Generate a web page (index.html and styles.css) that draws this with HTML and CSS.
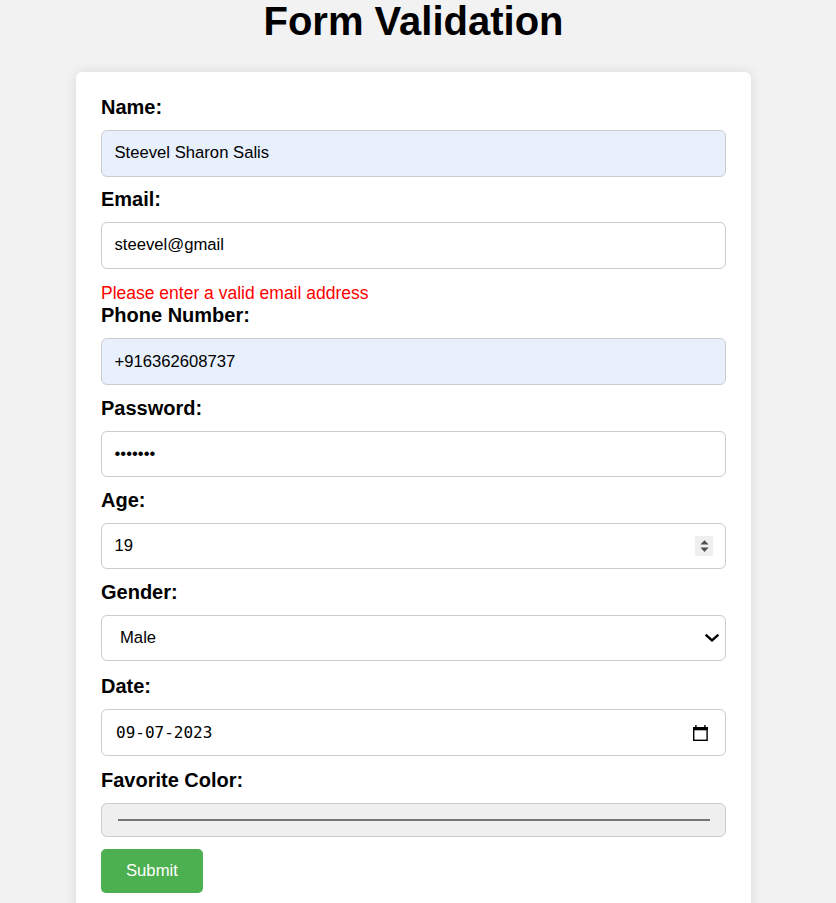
FILE: index.html
```html
<!DOCTYPE html>
<html lang="en">
<head>
<meta charset="utf-8">
<title>Form Validation</title>
<link rel="stylesheet" href="styles.css">
</head>
<body>
<h1 class="title">Form Validation</h1>
<form class="card" onsubmit="return false">
  <label class="label" for="name">Name:</label>
  <input class="field autofill" id="name" type="text" value="Steevel Sharon Salis">

  <label class="label" for="email">Email:</label>
  <input class="field field-email" id="email" type="text" value="steevel@gmail">
  <div class="error">Please enter a valid email address</div>

  <label class="label" for="phone">Phone Number:</label>
  <input class="field autofill" id="phone" type="text" value="+916362608737">

  <label class="label" for="password">Password:</label>
  <input class="field" id="password" type="password" value="1234567">

  <label class="label">Age:</label>
  <div class="field fake">
    <span class="fake-text">19</span>
    <svg class="spinner" width="18" height="20" viewBox="0 0 18 20" aria-hidden="true">
      <rect x="0" y="0" width="18" height="20" fill="#efefef"/>
      <polygon points="5.4,8.4 13.6,8.4 9.5,4.2" fill="#505050"/>
      <polygon points="5.4,11.6 13.6,11.6 9.5,15.9" fill="#505050"/>
    </svg>
  </div>

  <label class="label">Gender:</label>
  <div class="field fake fake-select">
    <span class="fake-text">Male</span>
    <svg class="chevron" width="14" height="8" viewBox="0 0 14 8" aria-hidden="true">
      <polyline points="1.5,1.5 7,6.3 12.5,1.5" fill="none" stroke="#000" stroke-width="2.4" stroke-linecap="square"/>
    </svg>
  </div>

  <label class="label">Date:</label>
  <div class="field fake fake-date">
    <span class="fake-text mono">09-07-2023</span>
    <svg class="calendar" width="15" height="16" viewBox="0 0 15 16" aria-hidden="true">
      <rect x="2.2" y="0" width="1.4" height="3" fill="#000"/>
      <rect x="11.2" y="0" width="1.4" height="3" fill="#000"/>
      <rect x="0.7" y="2.7" width="13.4" height="12.6" fill="none" stroke="#000" stroke-width="1.4"/>
      <rect x="0" y="2" width="14.8" height="3.3" fill="#000"/>
    </svg>
  </div>

  <label class="label">Favorite Color:</label>
  <div class="color-field">
    <div class="swatch"></div>
  </div>

  <button class="submit" type="submit">Submit</button>
</form>
</body>
</html>
```
FILE: styles.css
```css
html {
  background: #f2f2f2;
}

body {
  margin: 0;
  padding: 0 9px 0 0;
  background: #f2f2f2;
  font-family: "Liberation Sans", Arial, sans-serif;
  color: #000;
}

.title {
  margin: -2px 0 28px;
  font-size: 40px;
  line-height: 46px;
  font-weight: bold;
  text-align: center;
}

.card {
  box-sizing: border-box;
  width: 675px;
  margin: 0 auto;
  padding: 24px 25px 25px;
  background: #fff;
  border-radius: 6px;
  box-shadow: 0 0 12px rgba(0, 0, 0, 0.1);
}

.label {
  display: block;
  font-size: 20px;
  line-height: 23px;
  font-weight: bold;
  margin: 0 0 11px;
}

.field {
  display: block;
  box-sizing: border-box;
  width: 100%;
  height: 46.6px;
  margin: 0 0 11.6px;
  padding: 0 12.5px;
  border: 1px solid #cccccc;
  border-radius: 6px;
  background: #fff;
  font-family: "Liberation Sans", Arial, sans-serif;
  font-size: 16.67px;
  color: #000;
  outline: none;
}

.autofill {
  background: #e8f0fe;
}

.field-email {
  margin-bottom: 14.3px;
}

.error {
  color: #ff0000;
  font-size: 17.5px;
  line-height: 20px;
  margin: 0 0 1.3px;
}

.fake {
  display: flex;
  align-items: center;
  justify-content: space-between;
}

.fake-text {
  line-height: 20px;
}

.spinner {
  display: block;
}

.fake-select {
  padding: 0 5.7px 0 18px;
  height: 46.3px;
  margin-bottom: 14px;
}

.chevron {
  display: block;
}

.fake-date {
  padding: 0 17px 0 14px;
  margin-bottom: 13.3px;
}

.mono {
  font-family: "DejaVu Sans Mono", "Liberation Mono", monospace;
  font-size: 16px;
}

.calendar {
  display: block;
}

.color-field {
  box-sizing: border-box;
  width: 100%;
  height: 33.5px;
  margin: 0 0 12.5px;
  padding: 0 15px 0 15.5px;
  border: 1px solid #cccccc;
  border-radius: 6px;
  background: #efefef;
  display: flex;
  align-items: center;
}

.swatch {
  flex: 1;
  height: 2.3px;
  background: #767676;
}

.submit {
  display: block;
  height: 44px;
  padding: 0 25px;
  border: none;
  border-radius: 5px;
  background: #4caf50;
  color: #fff;
  font-family: "Liberation Sans", Arial, sans-serif;
  font-size: 16.67px;
  cursor: pointer;
}
```
